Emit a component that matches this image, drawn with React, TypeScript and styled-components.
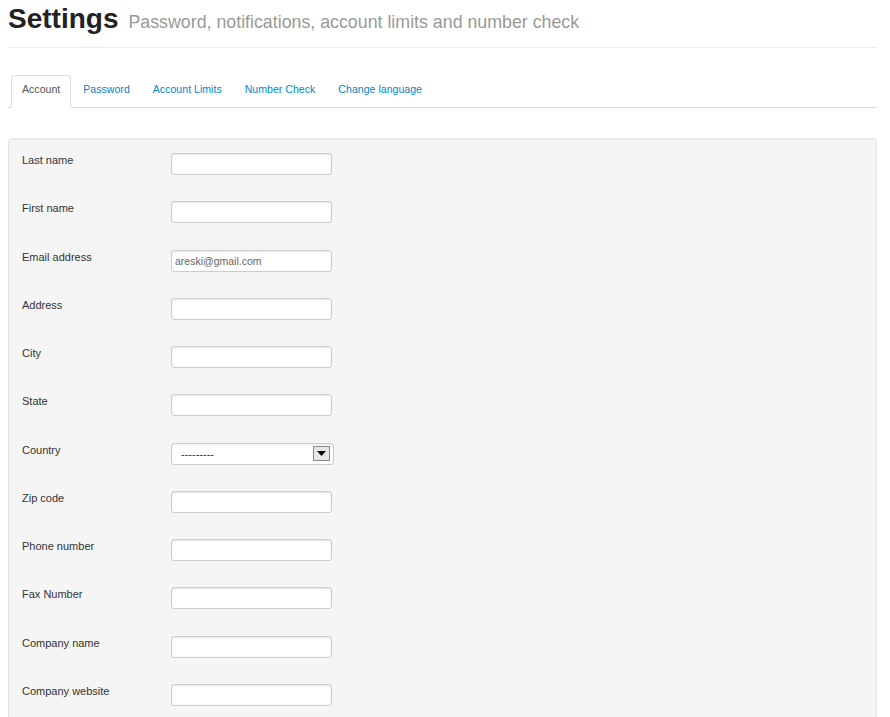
import React from "react";
import styled, { createGlobalStyle } from "styled-components";

const Global = createGlobalStyle`
  html, body { margin: 0; padding: 0; background: #fff; }
  body {
    padding: 0 13px 0 8px;
    font-family: "Liberation Sans", Arial, sans-serif;
    color: #333;
  }
`;

const Header = styled.div`
  display: flex;
  align-items: baseline;
  gap: 10px;
  height: 48px;
  box-sizing: border-box;
  padding-top: 3px;
  border-bottom: 1px solid #eee;
`;

const Title = styled.h1`
  margin: 0;
  font-size: 28px;
  line-height: 32px;
  font-weight: bold;
  color: #222;
`;

const Subtitle = styled.span`
  font-size: 17.8px;
  color: #999;
`;

const Tabs = styled.ul`
  list-style: none;
  margin: 27px 0 0;
  padding: 0 0 0 3px;
  display: flex;
  border-bottom: 1px solid #ddd;
`;

const Tab = styled.li<{ $active?: boolean }>`
  margin: 0 1px -1px 0;
  padding: 5px 10px 9px;
  font-size: 10.6px;
  line-height: 17px;
  border: 1px solid ${(p) => (p.$active ? "#ddd" : "transparent")};
  border-bottom-color: transparent;
  border-radius: 4px 4px 0 0;
  background: ${(p) => (p.$active ? "#fff" : "transparent")};
  color: ${(p) => (p.$active ? "#555" : "#0088cc")};
  cursor: pointer;
`;

const Well = styled.div`
  margin-top: 30px;
  background: #f5f5f5;
  border: 1px solid #e3e3e3;
  border-radius: 4px;
  box-shadow: inset 0 1px 1px rgba(0, 0, 0, 0.04);
  padding: 13px 13px 20px;
`;

const Row = styled.div`
  display: grid;
  grid-template-columns: 149px auto;
  align-items: start;
  height: 48.27px;
`;

const Label = styled.label`
  font-size: 11px;
  line-height: 16px;
  color: #333;
`;

const Input = styled.input`
  box-sizing: border-box;
  width: 161px;
  height: 22px;
  margin: 1px 0 0;
  padding: 0 3px;
  border: 1px solid #ccc;
  border-radius: 3px;
  background: #fff;
  box-shadow: inset 0 1px 2px rgba(0, 0, 0, 0.1);
  font-family: "Liberation Sans", Arial, sans-serif;
  font-size: 10.5px;
  color: #666;
  outline: none;
`;

const Select = styled.div`
  box-sizing: border-box;
  width: 163px;
  height: 22px;
  margin-top: 1px;
  display: flex;
  align-items: center;
  justify-content: space-between;
  padding: 0 3px 0 9px;
  border: 1px solid #ccc;
  border-radius: 3px;
  background: #fff;
  box-shadow: inset 0 1px 2px rgba(0, 0, 0, 0.08);
  font-size: 11px;
  color: #333;
`;

const Arrow = styled.span`
  box-sizing: border-box;
  width: 17px;
  height: 15px;
  border: 1px solid #888;
  background: #e6e6e6;
  display: flex;
  align-items: center;
  justify-content: center;
`;

const fields: { label: string; value?: string; select?: boolean }[] = [
  { label: "Last name" },
  { label: "First name" },
  { label: "Email address", value: "areski@gmail.com" },
  { label: "Address" },
  { label: "City" },
  { label: "State" },
  { label: "Country", select: true },
  { label: "Zip code" },
  { label: "Phone number" },
  { label: "Fax Number" },
  { label: "Company name" },
  { label: "Company website" },
];

const tabs = ["Account", "Password", "Account Limits", "Number Check", "Change language"];

export default function App() {
  return (
    <>
      <Global />
      <Header>
        <Title>Settings</Title>
        <Subtitle>Password, notifications, account limits and number check</Subtitle>
      </Header>
      <Tabs>
        {tabs.map((t, i) => (
          <Tab key={t} $active={i === 0}>
            {t}
          </Tab>
        ))}
      </Tabs>
      <Well>
        {fields.map((f) => (
          <Row key={f.label}>
            <Label>{f.label}</Label>
            {f.select ? (
              <Select>
                <span>---------</span>
                <Arrow>
                  <svg width="9" height="5" viewBox="0 0 9 5">
                    <path d="M0 0 H9 L4.5 5 Z" fill="#000" />
                  </svg>
                </Arrow>
              </Select>
            ) : (
              <Input defaultValue={f.value ?? ""} />
            )}
          </Row>
        ))}
      </Well>
    </>
  );
}
